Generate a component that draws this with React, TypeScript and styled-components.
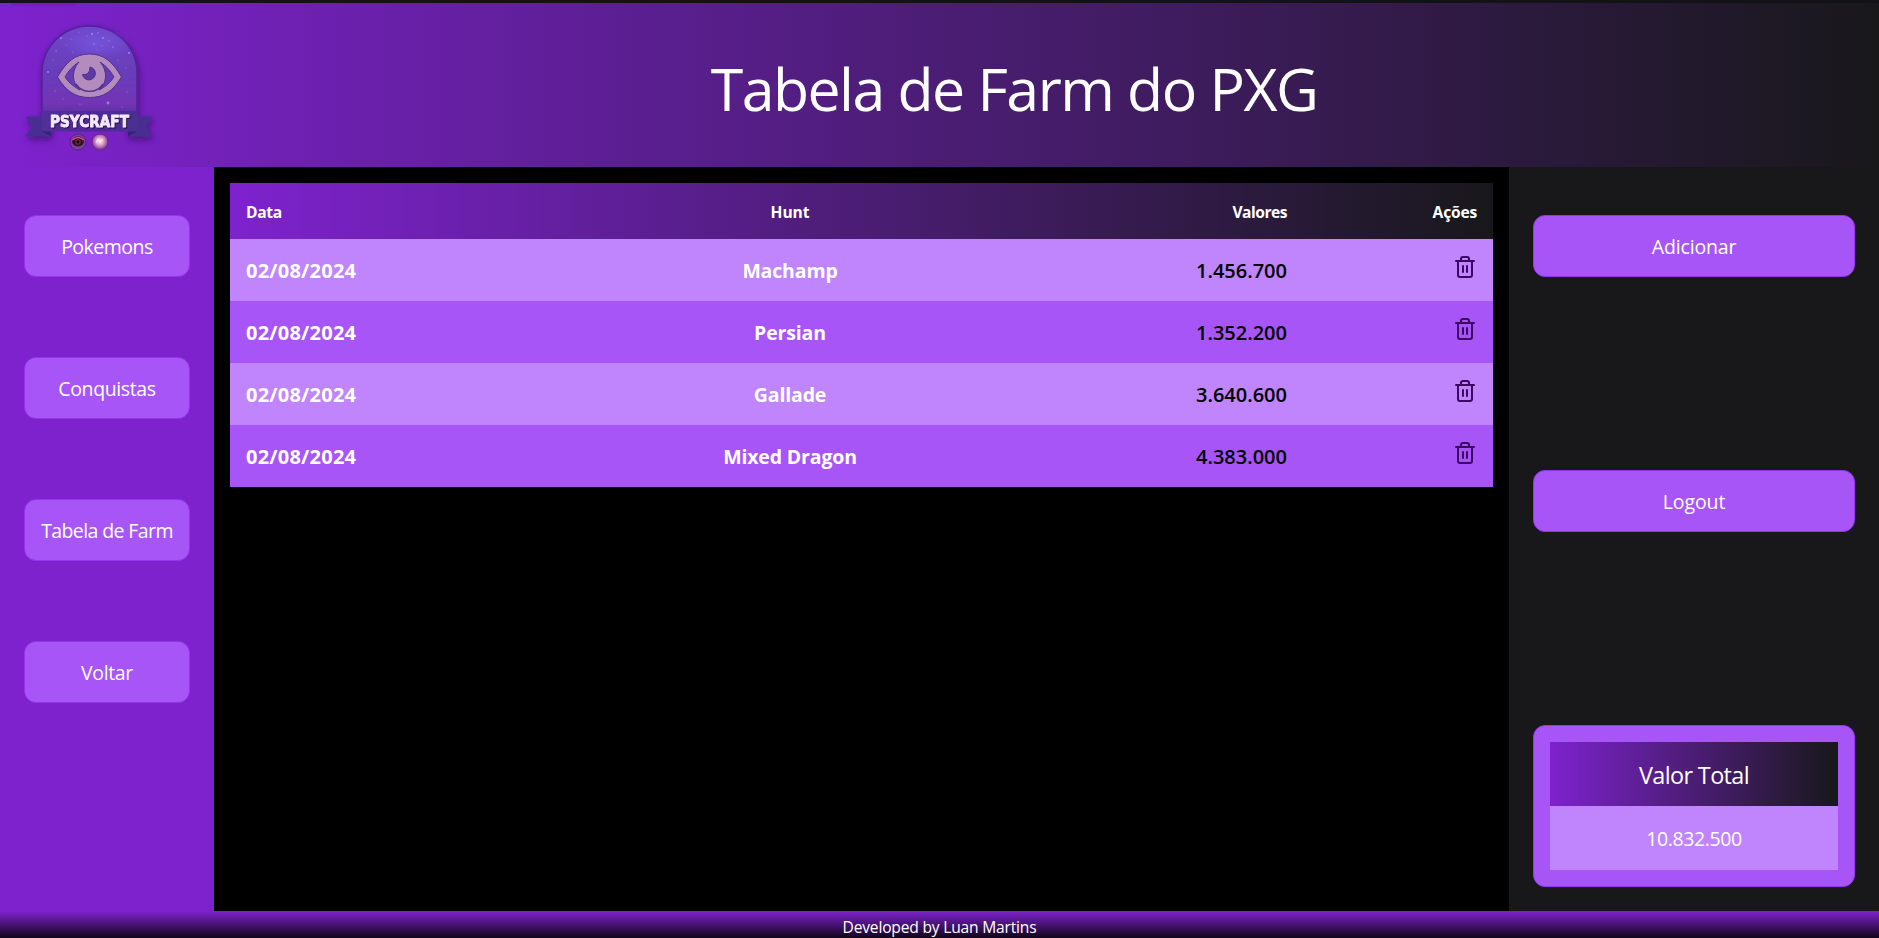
import React from "react";
import styled, { createGlobalStyle } from "styled-components";
import { Trash2 } from "lucide-react";

const GlobalStyle = createGlobalStyle`
  *, *::before, *::after { box-sizing: border-box; }
  body {
    margin: 0;
    overflow: hidden;
    background: #000;
    color: #fff;
    font-family: "Segoe UI", "Open Sans", "Noto Sans", sans-serif;
  }
`;

const Page = styled.div`
  display: flex;
  flex-direction: column;
  height: 100vh;
  overflow: hidden;
  border-top: 3px solid #131217;
`;

const Header = styled.header`
  display: flex;
  flex: none;
  height: 164px;
  background: linear-gradient(to right, #7e22ce, #18181b);
`;

const LogoImage = styled.svg`
  flex: none;
  width: 160px;
  height: 164px;
`;

const Title = styled.h1`
  flex: 1;
  margin: 0;
  padding: 3px 11px 0 0;
  font-size: 59px;
  font-weight: 400;
  line-height: 164px;
  letter-spacing: -1.53px;
  text-align: center;
`;

const Body = styled.div`
  flex: 1;
  display: grid;
  grid-template-columns: 214px 1fr 370px;
  min-height: 0;
`;

const Sidebar = styled.nav`
  display: flex;
  flex-direction: column;
  gap: 80px;
  padding: 48px 24px;
  background: #7e22ce;
`;

const Actions = styled.aside`
  display: flex;
  flex-direction: column;
  justify-content: space-between;
  padding: 48px 24px 24px;
  background: #18181b;
`;

const Button = styled.button<{ $track: number }>`
  height: 62px;
  padding: 1px 0 0;
  border: 1px solid #9333ea;
  border-radius: 12px;
  background: #a855f7;
  color: #fff;
  font: inherit;
  font-size: 19.5px;
  letter-spacing: ${(p) => p.$track}px;
  white-space: nowrap;
`;

const TotalCard = styled.section`
  padding: 16px;
  border: 1px solid #9333ea;
  border-radius: 12px;
  background: #a855f7;
  text-align: center;
`;

const TotalTitle = styled.div`
  height: 64px;
  padding-top: 1px;
  background: linear-gradient(to right, #7e22ce, #18181b);
  font-size: 23.4px;
  line-height: 64px;
  letter-spacing: -0.62px;
`;

const TotalValue = styled.div`
  height: 64px;
  padding-top: 1px;
  background: #c084fc;
  font-size: 19.5px;
  line-height: 64px;
  letter-spacing: -0.4px;
`;

const Main = styled.main`
  padding: 16px;
  background: #000;
`;

const Table = styled.table`
  width: 100%;
  table-layout: fixed;
  border-collapse: collapse;
`;

const Col = styled.col<{ $width?: number }>`
  width: ${(p) => (p.$width ? `${p.$width}px` : "auto")};
`;

const HeadRow = styled.tr`
  height: 56px;
  background: linear-gradient(to right, #7e22ce, #18181b);
`;

type Align = "left" | "center" | "right";

const HeadCell = styled.th<{ $align: Align; $track: number }>`
  padding: 1px 16px 0;
  font-size: 15.6px;
  font-weight: 700;
  line-height: 24px;
  letter-spacing: ${(p) => p.$track}px;
  text-align: ${(p) => p.$align};
`;

const Row = styled.tr`
  height: 62px;
  background: #c084fc;
  &:nth-child(even) { background: #a855f7; }
`;

const Cell = styled.td<{ $align?: Align }>`
  padding: 1px 16px 0;
  font-size: 19.5px;
  font-weight: 700;
  line-height: 28px;
  letter-spacing: -0.15px;
  text-align: ${(p) => p.$align ?? "left"};
`;

const DateCell = styled(Cell)`
  font-size: 20px;
  letter-spacing: 0.22px;
`;

const ValueCell = styled(Cell)`
  color: #000;
  font-size: 20px;
  font-weight: 600;
  letter-spacing: 0;
`;

const IconCell = styled(Cell)`
  padding: 0 16px 7px;
  line-height: 0;
`;

const Footer = styled.footer`
  flex: none;
  height: 27px;
  overflow: hidden;
  padding-top: 4px;
  background: linear-gradient(to bottom, #7e22ce, #000 31px);
  font-size: 15.6px;
  line-height: 24px;
  letter-spacing: -0.2px;
  text-align: center;
`;

const stars: [number, number, number][] = [
  [61, 38, 1], [56, 51, 0.7], [48, 72, 1], [66, 45, 0.5], [71, 39, 0.6],
  [92, 34, 1], [98, 33, 0.7], [103, 38, 1], [87, 36, 0.6], [94, 44, 0.8],
  [109, 41, 0.7], [113, 47, 0.8], [102, 46, 0.5], [118, 60, 0.6],
  [129, 53, 1], [126, 68, 0.5], [53, 60, 0.6], [73, 52, 0.6],
  [55, 91, 0.6], [63, 99, 0.5], [108, 103, 1.4], [127, 92, 0.6],
  [80, 104, 0.6], [122, 107, 0.5], [97, 50, 0.5], [79, 32, 0.5],
];

const LogoText = styled.text`
  font: 700 15.3px "DejaVu Sans", sans-serif;
  fill: #f5e9ff;
  stroke: #f5e9ff;
  stroke-width: 0.9px;
  stroke-linejoin: round;
  filter: drop-shadow(1px 1.2px 0.3px #2b124f);
`;

function Logo() {
  return (
    <LogoImage viewBox="0 3 160 164" role="img" aria-label="Psycraft">
      <defs>
        <linearGradient id="arch" x1="0" y1="0" x2="0" y2="1">
          <stop offset="0" stopColor="#7147cb" />
          <stop offset="0.5" stopColor="#683dba" />
          <stop offset="0.85" stopColor="#7334b5" />
          <stop offset="1" stopColor="#57319f" />
        </linearGradient>
        <radialGradient id="nebula">
          <stop offset="0" stopColor="#775fe8" stopOpacity="0.6" />
          <stop offset="1" stopColor="#775fe8" stopOpacity="0" />
        </radialGradient>
        <linearGradient id="ribbon">
          <stop offset="0" stopColor="#513098" />
          <stop offset="0.5" stopColor="#52279a" />
          <stop offset="1" stopColor="#493092" />
        </linearGradient>
        <radialGradient id="pearl" cx="0.5" cy="0.45">
          <stop offset="0" stopColor="#ffe8ef" />
          <stop offset="0.5" stopColor="#df9bc4" />
          <stop offset="1" stopColor="#884197" />
        </radialGradient>
        <filter id="soft" x="-20%" y="-20%" width="140%" height="150%">
          <feDropShadow dx="1" dy="3" stdDeviation="3" floodColor="#2b0b59" floodOpacity="0.65" />
        </filter>
      </defs>
      <path d="M11 3H76V6H11Z" fill="#4c1592" opacity="0.18" />
      <g filter="url(#soft)">
        <path d="M25.5 116.5H51V136.5H25.5L32.5 126.5Z M153 116.5H128V136.5H153L146 126.5Z" fill="#4a2d91" />
        <path d="M42 117V73A47.5 47 0 0 1 137 73V117Z" fill="url(#arch)" stroke="#56209e" strokeWidth="1.5" />
      </g>
      <ellipse cx="96" cy="44" rx="34" ry="16" fill="url(#nebula)" />
      {stars.map(([x, y, r]) => (
        <circle key={`${x}-${y}`} cx={x} cy={y} r={r} fill="#a99cf5" opacity="0.75" />
      ))}
      <g stroke="#50308c" strokeWidth="1">
        <path
          d="M57.5 77C66 62 75 54 89.500 54S113 62 121.500 77C113 91 104 97.500 89.500 97.500S66 91 57.500 77Z"
          fill="#b38cbd"
        />
        <path d="M65 77C69 70 73 66 79 62C71 71 72 83 80 90C74 87 69 83 65 77Z" fill="#673bb6" />
        <path d="M114 77C110 70 106 66 100 62C108 71 107 83 99 90C105 87 110 83 114 77Z" fill="#673bb6" />
        <path d="M76 84A16 16 0 0 0 103 84" fill="none" strokeWidth="1.4" />
        <path d="M90 67A6.5 6.5 0 1 1 82.5 74.500Q90 75.500 90 67Z" fill="#6039a7" />
      </g>
      <path d="M42 111H137V131.500H42Z" fill="url(#ribbon)" />
      <path d="M42 131.500H51V136.500Z M137 131.500H128V136.500Z" fill="#39217a" />
      <LogoText x="50" y="126.5" textLength="79" lengthAdjust="spacingAndGlyphs">
        PSYCRAFT
      </LogoText>
      <circle cx="78" cy="142" r="8" fill="#784296" stroke="#552087" />
      <ellipse cx="78" cy="141.500" rx="5.800" ry="5" fill="#301023" />
      <path d="M72.500 140Q78 135 83.500 140" fill="none" stroke="#e34b91" strokeWidth="1.3" />
      <circle cx="78" cy="142" r="2.200" fill="#150512" stroke="#a32b53" />
      <circle cx="100" cy="142" r="8" fill="url(#pearl)" stroke="#6a2890" />
      <path d="M96 143l2-4 2 3 3-3" fill="none" stroke="#fff" strokeWidth="1.500" opacity="0.5" />
    </LogoImage>
  );
}

const links = [
  { label: "Pokemons", track: -0.5 },
  { label: "Conquistas", track: -0.37 },
  { label: "Tabela de Farm", track: -0.6 },
  { label: "Voltar", track: -0.35 },
];

const farms = [
  { date: "02/08/2024", hunt: "Machamp", value: "1.456.700" },
  { date: "02/08/2024", hunt: "Persian", value: "1.352.200" },
  { date: "02/08/2024", hunt: "Gallade", value: "3.640.600" },
  { date: "02/08/2024", hunt: "Mixed Dragon", value: "4.383.000" },
];

export default function App() {
  return (
    <>
      <GlobalStyle />
      <Page>
        <Header>
          <Logo />
          <Title>Tabela de Farm do PXG</Title>
        </Header>
        <Body>
          <Sidebar>
            {links.map((l) => (
              <Button key={l.label} $track={l.track}>{l.label}</Button>
            ))}
          </Sidebar>
          <Main>
            <Table>
              <colgroup>
                <Col $width={220} />
                <Col $width={680} />
                <Col />
                <Col $width={190} />
              </colgroup>
              <thead>
                <HeadRow>
                  <HeadCell $align="left" $track={-0.35}>Data</HeadCell>
                  <HeadCell $align="center" $track={-0.1}>Hunt</HeadCell>
                  <HeadCell $align="right" $track={-0.5}>Valores</HeadCell>
                  <HeadCell $align="right" $track={-0.2}>Ações</HeadCell>
                </HeadRow>
              </thead>
              <tbody>
                {farms.map((f) => (
                  <Row key={f.hunt}>
                    <DateCell>{f.date}</DateCell>
                    <Cell $align="center">{f.hunt}</Cell>
                    <ValueCell $align="right">{f.value}</ValueCell>
                    <IconCell $align="right">
                      <Trash2 size={24} color="#3b0764" />
                    </IconCell>
                  </Row>
                ))}
              </tbody>
            </Table>
          </Main>
          <Actions>
            <Button $track={-0.15}>Adicionar</Button>
            <Button $track={-0.1}>Logout</Button>
            <TotalCard>
              <TotalTitle>Valor Total</TotalTitle>
              <TotalValue>10.832.500</TotalValue>
            </TotalCard>
          </Actions>
        </Body>
        <Footer>Developed by Luan Martins</Footer>
      </Page>
    </>
  );
}
